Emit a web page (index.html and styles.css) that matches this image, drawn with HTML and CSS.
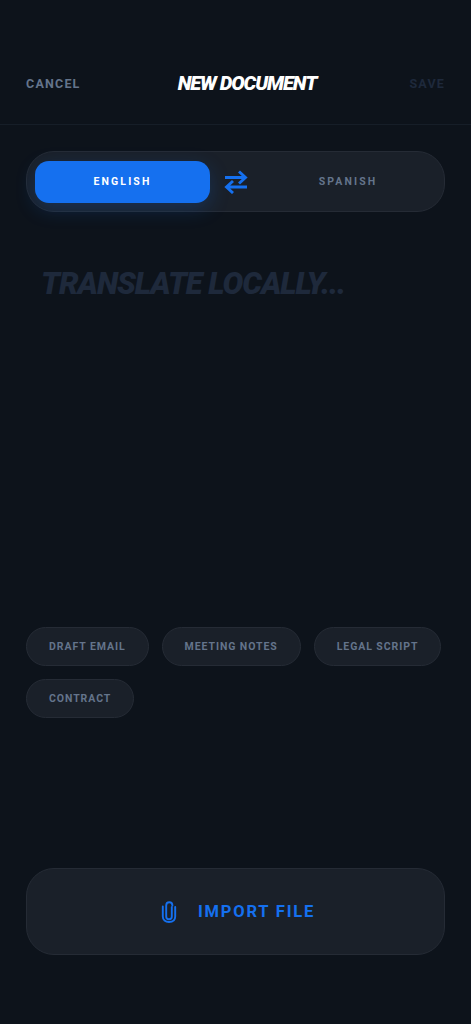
FILE: index.html
```html
<!DOCTYPE html>
<html lang="en">
<head>
<meta charset="utf-8">
<title>New Document</title>
<link rel="stylesheet" href="styles.css">
</head>
<body>
<div class="screen">
  <header class="topbar">
    <span class="cancel">CANCEL</span>
    <h1 class="title">NEW DOCUMENT</h1>
    <span class="save">SAVE</span>
  </header>
  <main class="content">
    <div class="langs">
      <div class="lang active">ENGLISH</div>
      <svg class="swap" viewBox="0 0 24 24" width="24" height="24" fill="none" stroke="#1570ef" stroke-width="2.9">
        <path d="M1 7.5H22M15 1.5L21.5 7.5L15 13.5"/>
        <path d="M23 17H2.5M9 11L2.5 17L9 23"/>
      </svg>
      <div class="lang other">SPANISH</div>
    </div>
    <div class="placeholder">TRANSLATE LOCALLY...</div>
    <div class="chips">
      <span class="chip">DRAFT EMAIL</span>
      <span class="chip">MEETING NOTES</span>
      <span class="chip">LEGAL SCRIPT</span>
      <span class="chip">CONTRACT</span>
    </div>
    <button class="import">
      <svg class="clip" viewBox="0 0 16 22" width="16" height="22" fill="none" stroke="#1570ef" stroke-width="1.9" stroke-linecap="round">
        <path d="M10.8 6V15.5C10.8 17.3 9.7 18.3 8 18.3C6.3 18.3 5.2 17.3 5.2 15.5V4.6C5.2 2.6 6.4 1.2 8.3 1.2C10.2 1.2 11.4 2.6 11.4 4.6"/>
        <path d="M14.2 6V15.5C14.2 19 11.7 21 8 21C4.3 21 1.8 19 1.8 15.5V5.5"/>
      </svg>
      <span>IMPORT FILE</span>
    </button>
  </main>
</div>
</body>
</html>
```
FILE: styles.css
```css
* { box-sizing: border-box; }
html, body { margin: 0; padding: 0; background: #0d131b; }
body { font-family: Roboto, "Liberation Sans", Arial, sans-serif; }
.screen { width: 471px; height: 1024px; display: flex; flex-direction: column; overflow: hidden; }
.topbar {
  height: 125px; padding: 75px 26px 0; display: flex; justify-content: space-between;
  align-items: flex-start; border-bottom: 1px solid #161e28;
}
.cancel, .save { font-size: 12.5px; font-weight: 700; letter-spacing: 1.2px; line-height: 18px; }
.cancel { color: #64748b; }
.save { color: #1e293b; }
.title {
  margin: -2px 0 0 4px; font-size: 20px; line-height: 20px; font-weight: 900; font-style: italic;
  color: #fff; letter-spacing: -1.05px;
}
.content { flex: 1; padding: 26px 26px 69px; display: flex; flex-direction: column; }
.langs {
  height: 61px; border: 1px solid #252b35; border-radius: 28px; background: #1a2029;
  padding: 8px 0 8px 8px; display: flex; align-items: center;
}
.lang {
  height: 42px; flex: 1; border-radius: 14px; display: flex; align-items: center; justify-content: center;
  font-size: 10.5px; font-weight: 700; letter-spacing: 2.1px; color: #64748b;
}
.lang.active { flex: 0 0 175px; background: #1570ef; color: #fff; box-shadow: 0 6px 20px rgba(21,112,239,.22); }
.lang.other { margin-left: 4px; }
.swap { flex: none; margin-left: 14px; }
.placeholder {
  margin-top: 56px; font-size: 31px; line-height: 32px; font-weight: 900; font-style: italic;
  color: #1e293b; letter-spacing: -1.05px; padding-left: 15px;
}
.chips { margin-top: 327px; display: flex; flex-wrap: wrap; gap: 13px; }
.chip {
  height: 39px; padding: 0 22px; border: 1px solid #252b35; border-radius: 20px; background: #1a2029;
  display: flex; align-items: center; font-size: 10.5px; font-weight: 700; letter-spacing: .93px; color: #64748b;
}
.import {
  margin-top: auto; height: 87px; width: 100%; border: 1px solid #252b35; border-radius: 28px; background: #1a2029;
  display: flex; align-items: center; justify-content: center; gap: 21px; color: #1570ef;
  font-family: inherit; font-size: 16.5px; font-weight: 700; letter-spacing: 1.8px; padding: 0 0 0 5px;
}
.clip { flex: none; }
```
